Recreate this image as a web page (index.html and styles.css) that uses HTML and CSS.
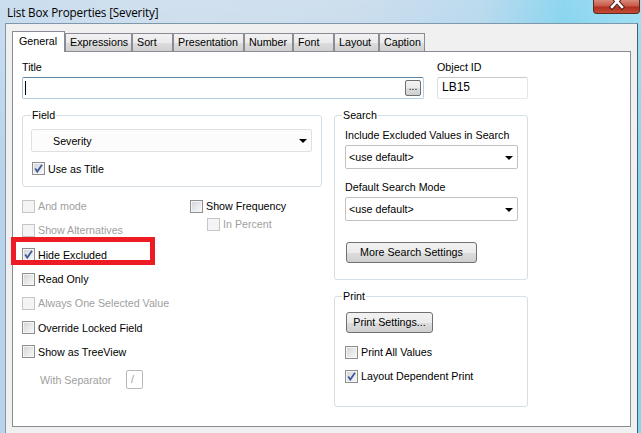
FILE: index.html
```html
<!DOCTYPE html>
<html>
<head>
<meta charset="utf-8">
<link rel="stylesheet" href="styles.css">
</head>
<body>
<div class="window">
  <div class="titlebar">
    <span class="wtitle">List Box Properties [Severity]</span>
    <div class="close"><svg width="16" height="11" viewBox="0 0 16 11"><path d="M3 -4 L13 7 M13 -4 L3 7" stroke="#4a1e16" stroke-width="4.5" stroke-linecap="square"/><path d="M3 -4 L13 7 M13 -4 L3 7" stroke="#ffffff" stroke-width="2.6" stroke-linecap="square"/></svg></div>
  </div>
  <div class="frame">
    <div class="tabs">
      <div class="tab active w-general">General</div>
      <div class="tab w-expr">Expressions</div>
      <div class="tab w-sort">Sort</div>
      <div class="tab w-pres">Presentation</div>
      <div class="tab w-num">Number</div>
      <div class="tab w-font">Font</div>
      <div class="tab w-layout">Layout</div>
      <div class="tab w-caption">Caption</div>
    </div>
    <div class="panel">
      <div class="toprow">
        <div class="titlecol">
          <div class="label">Title</div>
          <div class="input title-input"><span class="caret"></span><span class="dots">...</span></div>
        </div>
        <div class="idcol">
          <div class="label">Object ID</div>
          <div class="input id-input">LB15</div>
        </div>
      </div>
      <div class="main">
        <div class="leftcol">
          <fieldset class="group field-group">
            <legend>Field</legend>
            <div class="select field-select"><span class="sval">Severity</span><span class="arrow"></span></div>
            <div class="cb first"><span class="box checked"><svg width="11" height="11" viewBox="0 0 11 11"><path d="M2.2 5.6 L4.3 8.6 L9 1.8" fill="none" stroke="#3f5c99" stroke-width="1.8"/></svg></span>Use as Title</div>
          </fieldset>
          <div class="opts">
            <div class="optlist">
              <div class="cb row disabled"><span class="box"></span>And mode</div>
              <div class="cb row disabled"><span class="box"></span>Show Alternatives</div>
              <div class="cb row"><span class="box checked"><svg width="11" height="11" viewBox="0 0 11 11"><path d="M2.2 5.6 L4.3 8.6 L9 1.8" fill="none" stroke="#3f5c99" stroke-width="1.8"/></svg></span>Hide Excluded</div>
              <div class="cb row"><span class="box"></span>Read Only</div>
              <div class="cb row disabled"><span class="box"></span>Always One Selected Value</div>
              <div class="cb row"><span class="box"></span>Override Locked Field</div>
              <div class="cb row"><span class="box"></span>Show as TreeView</div>
              <div class="seprow"><span class="seplabel">With Separator</span><span class="sepinput">/</span></div>
            </div>
            <div class="freq">
              <div class="cb frow"><span class="box"></span>Show Frequency</div>
              <div class="cb frow disabled indent"><span class="box"></span>In Percent</div>
            </div>
          </div>
        </div>
        <div class="rightcol">
          <fieldset class="group search-group">
            <legend>Search</legend>
            <div class="label">Include Excluded Values in Search</div>
            <div class="select rsel"><span class="sval2">&lt;use default&gt;</span><span class="arrow"></span></div>
            <div class="label second">Default Search Mode</div>
            <div class="select rsel"><span class="sval2">&lt;use default&gt;</span><span class="arrow"></span></div>
            <div class="btn more">More Search Settings</div>
          </fieldset>
          <fieldset class="group print-group">
            <legend>Print</legend>
            <div class="btn printset">Print Settings...</div>
            <div class="cb prow first-p"><span class="box"></span>Print All Values</div>
            <div class="cb prow"><span class="box checked"><svg width="11" height="11" viewBox="0 0 11 11"><path d="M2.2 5.6 L4.3 8.6 L9 1.8" fill="none" stroke="#3f5c99" stroke-width="1.8"/></svg></span>Layout Dependent Print</div>
          </fieldset>
        </div>
      </div>
    </div>
  </div>
  <div class="highlight"></div>
</div>
</body>
</html>
```
FILE: styles.css
```css
html, body {
  margin: 0;
  padding: 0;
}
body {
  width: 641px;
  height: 433px;
  overflow: hidden;
  font-family: "Liberation Sans", Arial, sans-serif;
  font-size: 10.7px;
  color: #000;
}
.window {
  position: relative;
  width: 641px;
  height: 433px;
  background:
    linear-gradient(180deg, rgba(255,255,255,0.25) 0%, rgba(255,255,255,0) 40%),
    linear-gradient(90deg, #b9d3ea 0%, #c2d6e8 30%, #bdd4e8 55%, #a6cfe9 75%, #69c9ea 88%, #86d6f0 100%);
}
.titlebar {
  height: 23px;
  display: flex;
  align-items: flex-start;
}
.wtitle {
  font-family: "Open Sans", "Noto Sans", sans-serif;
  font-size: 11.7px;
  line-height: 16px;
  padding: 4px 0 0 7px;
  color: #000;
  letter-spacing: -0.15px;
}
.close {
  margin-left: auto;
  margin-right: 1px;
  width: 47px;
  height: 14px;
  box-sizing: border-box;
  border: 1px solid #5a2a22;
  border-top: none;
  border-radius: 0 0 4px 4px;
  background: linear-gradient(180deg, #d98a7c 0%, #c85a48 45%, #b0301f 55%, #c44c35 100%);
  display: flex;
  justify-content: center;
  align-items: flex-start;
}
.frame {
  margin-left: 5px;
  width: 633px;
  height: 410px;
  box-sizing: border-box;
  border: 1px solid #7e97ab;
  border-right-color: #4a5e6e;
  border-bottom: none;
  background: #f0f0f0;
  padding: 7px 0 0 6px;
}
.tabs {
  display: flex;
  align-items: flex-end;
  height: 20px;
  position: relative;
  z-index: 2;
}
.tab {
  height: 18px;
  box-sizing: border-box;
  border: 1px solid #898c95;
  border-bottom: none;
  background: linear-gradient(180deg, #f2f2f2 0%, #ebebeb 50%, #dddddd 51%, #cfcfcf 100%);
  line-height: 16px;
  padding-left: 4px;
  white-space: nowrap;
}
.tab.active {
  height: 21px;
  margin-bottom: -1px;
  background: #ffffff;
  padding-left: 6px;
  padding-top: 1px;
}
.w-general { width: 53px; }
.w-expr { width: 67px; }
.w-sort { width: 41px; }
.w-pres { width: 71px; }
.w-num { width: 49px; }
.w-font { width: 41px; }
.w-layout { width: 45px; }
.w-caption { width: 46px; }
.panel {
  width: 619px;
  height: 376px;
  box-sizing: border-box;
  border: 1px solid #898c95;
  background: #ffffff;
  padding: 8px 0 0 9px;
}
.toprow {
  display: flex;
}
.label {
  height: 17px;
  line-height: 14px;
  white-space: nowrap;
}
.titlecol {
  width: 402px;
}
.idcol {
  margin-left: 13px;
  width: 91px;
}
.input {
  height: 22px;
  box-sizing: border-box;
  border: 1px solid #abadb3;
  border-radius: 2px;
  background: #fff;
}
.title-input {
  border-color: #5d86a9 #b5cfe7 #b5cfe7 #a4c2dc;
  display: flex;
  align-items: center;
  padding: 0 2px 0 2px;
}
.caret {
  width: 1px;
  height: 14px;
  background: #000;
}
.dots {
  margin-left: auto;
  width: 16px;
  height: 16px;
  box-sizing: border-box;
  border: 1px solid #707070;
  border-radius: 2px;
  background: linear-gradient(180deg, #f2f2f2 0%, #ebebeb 50%, #dddddd 51%, #cfcfcf 100%);
  font-size: 10px;
  line-height: 11px;
  text-align: center;
}
.id-input {
  border-color: #c9ccd1 #e2e3ea #e3e9ef #dbdfe6;
  line-height: 18px;
  padding-left: 4px;
  font-size: 12px;
}
.main {
  display: flex;
  margin-top: 10px;
}
.leftcol {
  width: 300px;
}
.rightcol {
  margin-left: 12px;
  width: 194px;
}
fieldset.group {
  margin: 0;
  border: 1px solid #d5dfe5;
  border-radius: 3px;
  min-width: 0;
  box-sizing: border-box;
}
fieldset.group legend {
  padding: 0 1px;
  line-height: 13px;
  height: 13px;
}
.field-group {
  width: 300px;
  padding: 7px 9px 9px 8px;
}
.select {
  display: flex;
  align-items: center;
  box-sizing: border-box;
  border: 1px solid #d9d9d9;
  border-radius: 2px;
  background: #fff;
}
.field-select {
  height: 23px;
  border-color: #e0e0e0;
  background: #fcfcfc;
}
.sval {
  margin-left: 21px;
}
.sval2 {
  margin-left: 3px;
}
.arrow {
  margin-left: auto;
  margin-right: 4px;
  width: 0;
  height: 0;
  border-left: 4px solid transparent;
  border-right: 4px solid transparent;
  border-top: 4px solid #000;
  margin-top: 1px;
}
.cb {
  display: flex;
  align-items: center;
  white-space: nowrap;
}
.cb.first {
  margin-top: 8px;
  margin-left: 1px;
  height: 17px;
}
.box {
  width: 13px;
  height: 13px;
  flex: none;
  box-sizing: border-box;
  border: 1px solid #8e8f8f;
  background: linear-gradient(135deg, #cfd2d6 0%, #e8e9eb 55%, #fafafa 100%);
  box-shadow: inset 0 0 0 1px #f4f4f4;
  margin-right: 3px;
  display: flex;
  align-items: center;
  justify-content: center;
}
.box svg {
  display: block;
}
.disabled {
  color: #a0a0a0;
}
.disabled .box {
  border-color: #c6c6c6;
  background: #f4f4f4;
  box-shadow: none;
}
.opts {
  display: flex;
  margin-top: 7px;
}
.optlist {
  width: 168px;
}
.row {
  height: 24.3px;
}
.seprow {
  margin-top: 6px;
  height: 19px;
  display: flex;
  align-items: center;
  color: #a0a0a0;
  padding-left: 18px;
}
.seplabel {
  width: 86px;
}
.sepinput {
  width: 17px;
  height: 19px;
  box-sizing: border-box;
  border: 1px solid #b9b9b9;
  border-radius: 2px;
  line-height: 17px;
  padding-left: 4px;
}
.freq {
  padding-top: 3px;
}
.frow {
  height: 18px;
}
.indent {
  margin-left: 17px;
}
.search-group {
  width: 194px;
  padding: 6px 9px 16px 10px;
}
.search-group legend,
.print-group legend {
  margin-left: -3px;
}
.rsel {
  height: 24px;
  width: 173px;
  border-color: #c2c2c2;
}
.label.second {
  margin-top: 11px;
}
.btn {
  height: 21px;
  box-sizing: border-box;
  border: 1px solid #707070;
  border-radius: 3px;
  background: linear-gradient(180deg, #f2f2f2 0%, #ebebeb 50%, #dddddd 51%, #cfcfcf 100%);
  text-align: center;
  line-height: 19px;
  margin-left: 1px;
  white-space: nowrap;
}
.more {
  width: 131px;
  margin-top: 21px;
}
fieldset.print-group {
  width: 194px;
  margin-top: 10px;
  padding: 9px 9px 18px 10px;
}
.printset {
  width: 87px;
}
.prow {
  height: 24px;
}
.first-p {
  margin-top: 7px;
}
.highlight {
  position: absolute;
  left: 11px;
  top: 237px;
  width: 144px;
  height: 28px;
  box-sizing: border-box;
  border: 5px solid #ed1c24;
}
```
